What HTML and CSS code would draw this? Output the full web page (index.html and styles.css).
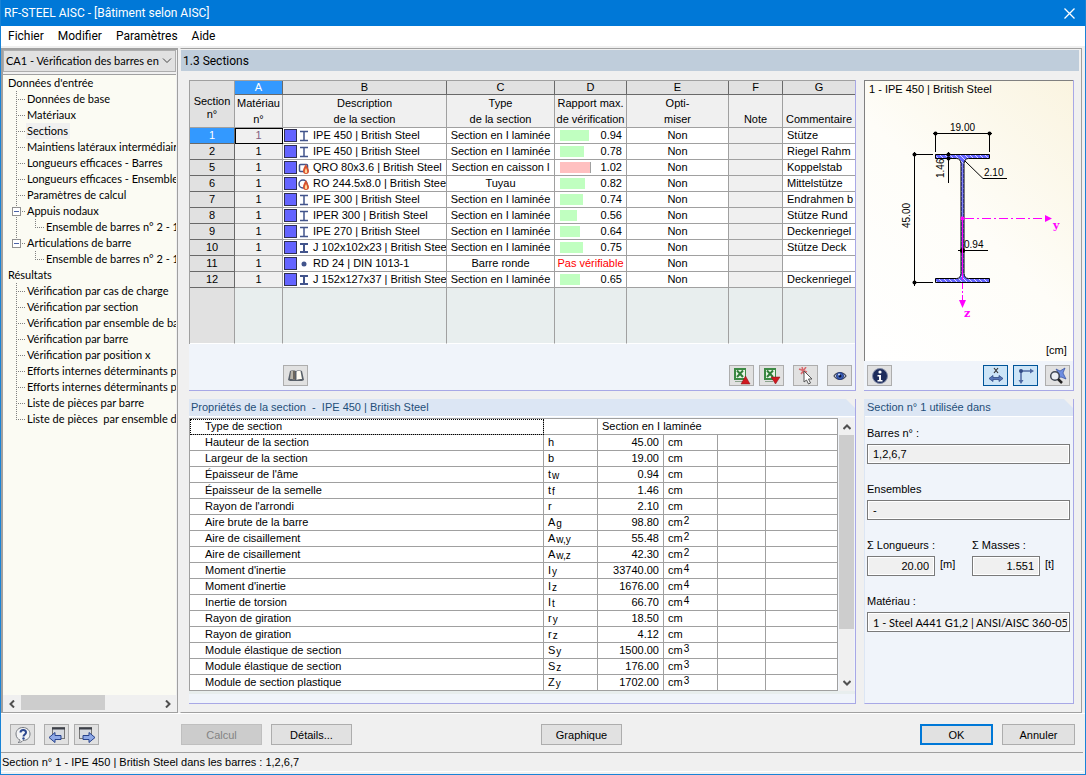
FILE: index.html
```html
<!DOCTYPE html>
<html lang="fr">
<head>
<meta charset="utf-8">
<title>RF-STEEL AISC - [Bâtiment selon AISC]</title>
<link rel="stylesheet" href="styles.css">
</head>
<body>
<svg class="defs" aria-hidden="true">
  <symbol id="sec-i" viewBox="0 0 12 12"><path d="M2 1.500h8M2 10.500h8M6 1.500v9" stroke="#42548c" stroke-width="1.500" fill="none"/></symbol>
  <symbol id="sec-ih" viewBox="0 0 12 12"><path d="M2 2h8M2 10h8" stroke="#42548c" stroke-width="2" fill="none"/><path d="M6 2v8" stroke="#42548c" stroke-width="2"/></symbol>
  <symbol id="sec-dot" viewBox="0 0 12 12"><circle cx="6" cy="6" r="2.500" fill="#42548c"/></symbol>
  <symbol id="flame" viewBox="0 0 12 12"><path d="M8 2c-2 3-3 5-3 7 0 2 1 3 3 3s3-1 3-3c0-2-2-4-3-7z" fill="#d8522e"/><path d="M8 6c-1 2-1.500 3-1 4.500.6.8 1.600.8 2 0C9.500 9 9 8 8 6z" fill="#ffd9a0"/></symbol>
  <symbol id="sec-box" viewBox="0 0 12 12"><rect x="1.500" y="2.500" width="8" height="7" rx="1" fill="#fff" stroke="#42548c" stroke-width="1.500"/><use href="#flame"/></symbol>
  <symbol id="sec-tube" viewBox="0 0 12 12"><circle cx="5" cy="6" r="4" fill="#fff" stroke="#42548c" stroke-width="1.500"/><use href="#flame"/></symbol>
  <symbol id="excel" viewBox="0 0 18 18"><rect x="1" y="1" width="12" height="12" fill="#3c8a45"/><rect x="3" y="3" width="9" height="8" fill="#e8f4e6"/><path d="M4 3.500l6 6.500M10 3.500l-6 6.500" stroke="#2f7d38" stroke-width="2"/><path d="M2 14.500h8" stroke="#8aa48c"/></symbol>
</svg>
<div class="window">
  <header class="titlebar">
    <h1>RF-STEEL AISC - [Bâtiment selon AISC]</h1>
    <button class="close" aria-label="Fermer"><svg width="11" height="11" viewBox="0 0 11 11"><path d="M.5.500l10 10M10.500.500l-10 10" stroke="#fff" stroke-width="1.300" fill="none"/></svg></button>
  </header>
  <nav class="menubar">
    <button>Fichier</button><button>Modifier</button><button>Paramètres</button><button>Aide</button>
  </nav>

  <div class="workspace">
    <aside class="sidebar">
      <div class="combo">
        <select aria-label="Cas de calcul"><option>CA1 - Vérification des barres en acier</option></select>
        <svg width="10" height="6" viewBox="0 0 10 6"><path d="M1 .5l4 4 4-4" stroke="#444" fill="none"/></svg>
      </div>
      <ul class="tree">
        <li><span class="node">Données d'entrée</span></li>
        <li><i class="branch"></i><span class="node">Données de base</span></li>
        <li><i class="branch"></i><span class="node">Matériaux</span></li>
        <li><i class="branch"></i><span class="node current">Sections</span></li>
        <li><i class="branch"></i><span class="node">Maintiens latéraux intermédiaires</span></li>
        <li><i class="branch"></i><span class="node">Longueurs efficaces - Barres</span></li>
        <li><i class="branch"></i><span class="node">Longueurs efficaces - Ensembles</span></li>
        <li><i class="branch"></i><span class="node">Paramètres de calcul</span></li>
        <li><i class="branch"><button class="toggle" aria-label="Réduire Appuis nodaux"></button></i><span class="node">Appuis nodaux</span></li>
        <li><i class="branch pass"></i><i class="branch last"></i><span class="node">Ensemble de barres n° 2 - 1</span></li>
        <li><i class="branch last"><button class="toggle" aria-label="Réduire Articulations de barre"></button></i><span class="node">Articulations de barre</span></li>
        <li><i class="branch none"></i><i class="branch last"></i><span class="node">Ensemble de barres n° 2 - 1</span></li>
        <li><span class="node">Résultats</span></li>
        <li><i class="branch"></i><span class="node">Vérification par cas de charge</span></li>
        <li><i class="branch"></i><span class="node">Vérification par section</span></li>
        <li><i class="branch"></i><span class="node">Vérification par ensemble de barres</span></li>
        <li><i class="branch"></i><span class="node">Vérification par barre</span></li>
        <li><i class="branch"></i><span class="node">Vérification par position x</span></li>
        <li><i class="branch"></i><span class="node">Efforts internes déterminants par barre</span></li>
        <li><i class="branch"></i><span class="node">Efforts internes déterminants par ensemble</span></li>
        <li><i class="branch"></i><span class="node">Liste de pièces par barre</span></li>
        <li><i class="branch last"></i><span class="node">Liste de pièces&nbsp; par ensemble de barres</span></li>
      </ul>
      <div class="hscroll">
        <button aria-label="Défiler à gauche"><svg width="6" height="8" viewBox="0 0 6 8"><path d="M5 .5L1.500 4 5 7.500" stroke="#505050" stroke-width="2" fill="none"/></svg></button>
        <span class="thumb"></span>
        <button aria-label="Défiler à droite"><svg width="6" height="8" viewBox="0 0 6 8"><path d="M1 .5L4.500 4 1 7.500" stroke="#505050" stroke-width="2" fill="none"/></svg></button>
      </div>
    </aside>

    <main class="content">
      <h2 class="heading">1.3 Sections</h2>
      <div class="panels">
        <section class="panel sections">
          <table class="grid">
            <colgroup><col class="w45"><col class="w48"><col><col class="w108"><col class="w72"><col class="w102"><col class="w54"><col class="w72"></colgroup>
            <thead>
              <tr class="letters"><th rowspan="2" class="corner">Section<br>n°</th><th class="on">A</th><th>B</th><th>C</th><th>D</th><th>E</th><th>F</th><th>G</th></tr>
              <tr class="names"><th>Matériau<br>n°</th><th>Description<br>de la section</th><th>Type<br>de la section</th><th>Rapport max.<br>de vérification</th><th>Opti-<br>miser</th><th>Note</th><th>Commentaire</th></tr>
            </thead>
            <tbody>
              <tr><th class="on">1</th><td class="mat focus">1</td><td><div class="desc"><b class="swatch"></b><svg><use href="#sec-i"/></svg><span>IPE 450 | British Steel</span></div></td><td class="c">Section en I laminée</td><td><div class="ratio"><span class="track"><b class="bar" style="width:94%"></b></span>0.94</div></td><td class="c">Non</td><td class="note"></td><td class="com">Stütze</td></tr>
              <tr><th>2</th><td class="mat">1</td><td><div class="desc"><b class="swatch"></b><svg><use href="#sec-i"/></svg><span>IPE 450 | British Steel</span></div></td><td class="c">Section en I laminée</td><td><div class="ratio"><span class="track"><b class="bar" style="width:78%"></b></span>0.78</div></td><td class="c">Non</td><td class="note"></td><td class="com">Riegel Rahm</td></tr>
              <tr><th>5</th><td class="mat">1</td><td><div class="desc"><b class="swatch"></b><svg><use href="#sec-box"/></svg><span>QRO 80x3.6 | British Steel</span></div></td><td class="c">Section en caisson l</td><td><div class="ratio"><span class="track"><b class="bar over" style="width:100%"></b></span>1.02</div></td><td class="c">Non</td><td class="note"></td><td class="com">Koppelstab</td></tr>
              <tr><th>6</th><td class="mat">1</td><td><div class="desc"><b class="swatch"></b><svg><use href="#sec-tube"/></svg><span>RO 244.5x8.0 | British Stee</span></div></td><td class="c">Tuyau</td><td><div class="ratio"><span class="track"><b class="bar" style="width:82%"></b></span>0.82</div></td><td class="c">Non</td><td class="note"></td><td class="com">Mittelstütze</td></tr>
              <tr><th>7</th><td class="mat">1</td><td><div class="desc"><b class="swatch"></b><svg><use href="#sec-i"/></svg><span>IPE 300 | British Steel</span></div></td><td class="c">Section en I laminée</td><td><div class="ratio"><span class="track"><b class="bar" style="width:74%"></b></span>0.74</div></td><td class="c">Non</td><td class="note"></td><td class="com">Endrahmen b</td></tr>
              <tr><th>8</th><td class="mat">1</td><td><div class="desc"><b class="swatch"></b><svg><use href="#sec-i"/></svg><span>IPER 300 | British Steel</span></div></td><td class="c">Section en I laminée</td><td><div class="ratio"><span class="track"><b class="bar" style="width:56%"></b></span>0.56</div></td><td class="c">Non</td><td class="note"></td><td class="com">Stütze Rund</td></tr>
              <tr><th>9</th><td class="mat">1</td><td><div class="desc"><b class="swatch"></b><svg><use href="#sec-i"/></svg><span>IPE 270 | British Steel</span></div></td><td class="c">Section en I laminée</td><td><div class="ratio"><span class="track"><b class="bar" style="width:64%"></b></span>0.64</div></td><td class="c">Non</td><td class="note"></td><td class="com">Deckenriegel</td></tr>
              <tr><th>10</th><td class="mat">1</td><td><div class="desc"><b class="swatch"></b><svg><use href="#sec-ih"/></svg><span>J 102x102x23 | British Stee</span></div></td><td class="c">Section en I laminée</td><td><div class="ratio"><span class="track"><b class="bar" style="width:75%"></b></span>0.75</div></td><td class="c">Non</td><td class="note"></td><td class="com">Stütze Deck</td></tr>
              <tr><th>11</th><td class="mat">1</td><td><div class="desc"><b class="swatch"></b><svg><use href="#sec-dot"/></svg><span>RD 24 | DIN 1013-1</span></div></td><td class="c">Barre ronde</td><td class="c bad">Pas vérifiable</td><td class="c">Non</td><td class="note"></td><td class="com"></td></tr>
              <tr><th>12</th><td class="mat">1</td><td><div class="desc"><b class="swatch"></b><svg><use href="#sec-ih"/></svg><span>J 152x127x37 | British Stee</span></div></td><td class="c">Section en I laminée</td><td><div class="ratio"><span class="track"><b class="bar" style="width:65%"></b></span>0.65</div></td><td class="c">Non</td><td class="note"></td><td class="com">Deckenriegel</td></tr>
              <tr class="filler"><th></th><td></td><td></td><td></td><td></td><td></td><td></td><td></td></tr>
            </tbody>
          </table>
          <div class="tools">
            <button class="tool library" aria-label="Bibliothèque"><svg width="18" height="18" viewBox="0 0 18 18"><path d="M1 13L3 4c2-1 4-1 6 0 2-1 4-1 6 0l2 9-2 1H3z" fill="#59606a"/><path d="M3 12l1-8c2-1 3-.5 4 .5V13c-1-1-3-1-5-1z" fill="#b9b5aa"/><path d="M6 4h2v9l-2-1z" fill="#6d675d"/><path d="M9.500 4.500c1-1 3-1 4-.5l1.500 8c-2 0-4 0-5.500 1z" fill="#fffdf4"/></svg></button>
            <button class="tool" aria-label="Exporter vers Excel"><svg width="18" height="18" viewBox="0 0 18 18"><use href="#excel"/><path d="M12.500 9l4.500 8H8z" fill="#d01820" stroke="#85141a" stroke-width=".5"/></svg></button>
            <button class="tool import" aria-label="Importer depuis Excel"><svg width="18" height="18" viewBox="0 0 18 18"><use href="#excel"/><path d="M12.500 17l4.500-7H8z" fill="#d01820" stroke="#85141a" stroke-width=".5"/></svg></button>
            <button class="tool" aria-label="Sélectionner"><svg width="18" height="18" viewBox="0 0 18 18"><path d="M2 2l8 3M9 0L4 7M5 0l2 7" stroke="#d8686c" stroke-width="1.500"/><path d="M7 4v11l2.500-2 2 4 2-1-2-4h3.500z" fill="#fff" stroke="#555" stroke-width="1"/></svg></button>
            <button class="tool" aria-label="Voir"><svg width="18" height="18" viewBox="0 0 18 18"><path d="M3 9c3-4.500 9-4.500 12 0-3 4.500-9 4.500-12 0z" fill="#dde3f2" stroke="#454b5c" stroke-width="1.300"/><circle cx="9" cy="9" r="3.500" fill="#3d62bd" stroke="#23397f"/><circle cx="9" cy="9" r="1.500" fill="#0d1535"/><circle cx="8" cy="7.500" r="1" fill="#cfe0ff"/></svg></button>
          </div>
        </section>

        <section class="panel preview">
          <svg class="drawing" viewBox="5 6 208 280" role="img" aria-label="Section IPE 450">
            <defs>
              <pattern id="hatch" width="5" height="5" patternUnits="userSpaceOnUse"><rect width="5" height="5" fill="#6464ff"/><path d="M0 0l5 5" stroke="#d8d8ff" stroke-width="1"/></pattern>
            </defs>
            <text x="9" y="18" class="t11">1 - IPE 450 | British Steel</text>
            <g stroke="#000" fill="none">
              <path d="M73 58.500h59M75.500 58v19M129.500 58v19M54.500 77v134M55 79.500h18M55 207.500h18M88.500 77v31M105 86l18 17.500h24M98 175.500h30"/>
              <path d="M75.500 79.500h54v4h-21q-4 0-4.500 5v110q.5 5 4.500 5h21v4h-54v-4h21q4 0 4.500-5v-110q-.5-5-4.500-5h-21z" fill="url(#hatch)"/>
            </g>
            <g><circle cx="75.500" cy="58.500" r="2"/><circle cx="129.500" cy="58.500" r="2"/><circle cx="54.500" cy="79.500" r="2"/><circle cx="54.500" cy="207.500" r="2"/><circle cx="88.500" cy="79.500" r="2"/><circle cx="88.500" cy="83.500" r="2"/><circle cx="102.500" cy="175.500" r="2.500"/></g>
            <path d="M102.500 88v55" stroke="#8080ff"/>
            <g stroke="#f0f" fill="none"><path d="M105 143.500h80" stroke-dasharray="9 3 2 3"/><path d="M102.500 145v60"/><path d="M102.500 208v18" stroke-dasharray="6 2 2 2"/></g>
            <g fill="#f0f"><circle cx="102.500" cy="143.500" r="2"/><path d="M185 140l7 3.500-7 3.500zM99 225h7l-3.500 8z"/><text x="193" y="154" class="axis">y</text><text x="104" y="242" class="axis">z</text></g>
            <text x="90" y="56" class="t10">19.00</text>
            <text x="124" y="101" class="t10">2.10</text>
            <text x="104" y="173" class="t10">0.94</text>
            <text transform="translate(50 153) rotate(-90)" class="t10">45.00</text>
            <text transform="translate(84 103) rotate(-90)" class="t10">1.46</text>
            <text x="186" y="279" class="t11">[cm]</text>
          </svg>
          <div class="tools">
            <button class="tool" aria-label="Informations"><svg width="18" height="18" viewBox="0 0 18 18"><circle cx="9" cy="9" r="7.500" fill="#1d2c5c" stroke="#8089a5"/><circle cx="9" cy="5" r="1.600" fill="#fff"/><path d="M6.500 8H10v5h1.500v1.500h-5V13H8V9.500H6.500z" fill="#fff"/></svg></button>
            <button class="tool pressed dims" aria-label="Cotes"><svg width="18" height="18" viewBox="0 0 18 18"><path d="M7 1l4 5M11 1L7 6" stroke="#333" stroke-width="1.200"/><path d="M2 11.500l4-3v2h6v-2l4 3-4 3v-2H6v2z" fill="#5877b8" stroke="#314b86" stroke-width=".8"/></svg></button>
            <button class="tool pressed" aria-label="Axes"><svg width="18" height="18" viewBox="0 0 18 18"><path d="M4 4h10M4 4v10" stroke="#4d68a2" stroke-width="1.500"/><circle cx="4" cy="4" r="2" fill="#314b86"/><path d="M13 1.500l4 2.500-4 2.500zM1.500 13h5L4 17z" fill="#4d68a2"/></svg></button>
            <button class="tool" aria-label="Vue entière"><svg width="18" height="18" viewBox="0 0 18 18"><path d="M7 2l4 2 5-3-2 5 3 6-5-2-3 1 1-4z" fill="#6d8de0" stroke="#304c9c" stroke-width=".7"/><circle cx="6" cy="9" r="4.300" fill="#edf2f8" fill-opacity=".8" stroke="#404854" stroke-width="1.500"/><path d="M9 12l4 4" stroke="#222" stroke-width="2.500"/></svg></button>
          </div>
        </section>

        <section class="panel props">
          <h3 class="caption">Propriétés de la section&nbsp; -&nbsp; IPE 450 | British Steel</h3>
          <div class="scroller">
            <table class="proplist">
              <colgroup><col><col class="w54"><col class="w66"><col class="w54"><col class="w48"><col class="w72"></colgroup>
              <tbody>
                <tr><td class="focused">Type de section</td><td></td><td colspan="3" class="l">Section en I laminée</td><td></td></tr>
                <tr><td>Hauteur de la section</td><td>h</td><td>45.00</td><td>cm</td><td></td><td></td></tr>
                <tr><td>Largeur de la section</td><td>b</td><td>19.00</td><td>cm</td><td></td><td></td></tr>
                <tr><td>Épaisseur de l'âme</td><td>t<sub>w</sub></td><td>0.94</td><td>cm</td><td></td><td></td></tr>
                <tr><td>Épaisseur de la semelle</td><td>t<sub>f</sub></td><td>1.46</td><td>cm</td><td></td><td></td></tr>
                <tr><td>Rayon de l'arrondi</td><td>r</td><td>2.10</td><td>cm</td><td></td><td></td></tr>
                <tr><td>Aire brute de la barre</td><td>A<sub>g</sub></td><td>98.80</td><td>cm<sup>2</sup></td><td></td><td></td></tr>
                <tr><td>Aire de cisaillement</td><td>A<sub>w,y</sub></td><td>55.48</td><td>cm<sup>2</sup></td><td></td><td></td></tr>
                <tr><td>Aire de cisaillement</td><td>A<sub>w,z</sub></td><td>42.30</td><td>cm<sup>2</sup></td><td></td><td></td></tr>
                <tr><td>Moment d'inertie</td><td>I<sub>y</sub></td><td>33740.00</td><td>cm<sup>4</sup></td><td></td><td></td></tr>
                <tr><td>Moment d'inertie</td><td>I<sub>z</sub></td><td>1676.00</td><td>cm<sup>4</sup></td><td></td><td></td></tr>
                <tr><td>Inertie de torsion</td><td>I<sub>t</sub></td><td>66.70</td><td>cm<sup>4</sup></td><td></td><td></td></tr>
                <tr><td>Rayon de giration</td><td>r<sub>y</sub></td><td>18.50</td><td>cm</td><td></td><td></td></tr>
                <tr><td>Rayon de giration</td><td>r<sub>z</sub></td><td>4.12</td><td>cm</td><td></td><td></td></tr>
                <tr><td>Module élastique de section</td><td>S<sub>y</sub></td><td>1500.00</td><td>cm<sup>3</sup></td><td></td><td></td></tr>
                <tr><td>Module élastique de section</td><td>S<sub>z</sub></td><td>176.00</td><td>cm<sup>3</sup></td><td></td><td></td></tr>
                <tr><td>Module de section plastique</td><td>Z<sub>y</sub></td><td>1702.00</td><td>cm<sup>3</sup></td><td></td><td></td></tr>
              </tbody>
            </table>
            <div class="vscroll">
              <button aria-label="Défiler vers le haut"><svg width="8" height="6" viewBox="0 0 8 6"><path d="M.5 5L4 1.500 7.500 5" stroke="#505050" stroke-width="2" fill="none"/></svg></button>
              <span class="thumb"></span>
              <button aria-label="Défiler vers le bas"><svg width="8" height="6" viewBox="0 0 8 6"><path d="M.5 1L4 4.500 7.500 1" stroke="#505050" stroke-width="2" fill="none"/></svg></button>
            </div>
          </div>
        </section>

        <section class="panel usage">
          <h3 class="caption">Section n° 1 utilisée dans</h3>
          <form class="fields">
            <div class="field"><label for="members">Barres n° :</label><input id="members" value="1,2,6,7" readonly></div>
            <div class="field"><label for="sets">Ensembles</label><input id="sets" value="-" readonly></div>
            <div class="pair">
              <div class="field"><label for="length">Σ Longueurs :</label><div class="unit"><input id="length" value="20.00" readonly><span>[m]</span></div></div>
              <div class="field"><label for="mass">Σ Masses :</label><div class="unit"><input id="mass" value="1.551" readonly><span>[t]</span></div></div>
            </div>
            <div class="field"><label for="material">Matériau :</label><input id="material" value="1 - Steel A441 G1,2 | ANSI/AISC 360-05" readonly></div>
          </form>
        </section>
      </div>
    </main>
  </div>

  <div class="actions">
    <div class="nav">
      <button class="tool help" aria-label="Aide"><svg width="18" height="18" viewBox="0 0 18 18"><path d="M9 1.500c-4.500 0-7 3-7 6.500s2 5 4 6c0 1-1 2-2 2.500 2 0 4-.5 5-2 4.500 0 7-3 7-6.500s-3-6.500-7-6.500z" fill="#f2f3f5" stroke="#777b82"/><path d="M6.500 6.500C6.500 3 12 3 12 6.500 12 8.500 9.500 8.500 9.500 10.500" fill="none" stroke="#2c478f" stroke-width="2"/><circle cx="9.500" cy="12.500" r="1.200" fill="#2c478f"/></svg></button>
      <button class="tool" aria-label="Page précédente"><svg width="18" height="18" viewBox="0 0 18 18"><rect x="4.500" y="1.500" width="12" height="11" fill="#d7dae0" stroke="#777"/><path d="M4 2.500h13" stroke="#3b3f48" stroke-width="2"/><path d="M1 11.500l6-5v3h6v4H7v3z" fill="#8ea8e6" stroke="#27428c"/></svg></button>
      <button class="tool" aria-label="Page suivante"><svg width="18" height="18" viewBox="0 0 18 18"><rect x="1.500" y="1.500" width="12" height="11" fill="#d7dae0" stroke="#777"/><path d="M1 2.500h13" stroke="#3b3f48" stroke-width="2"/><path d="M17 11.500l-6-5v3H5v4h6v3z" fill="#8ea8e6" stroke="#27428c"/></svg></button>
    </div>
    <button class="btn" disabled>Calcul</button>
    <button class="btn">Détails...</button>
    <button class="btn graphic">Graphique</button>
    <button class="btn ok">OK</button>
    <button class="btn cancel">Annuler</button>
  </div>
  <footer class="status">Section n° 1 - IPE 450 | British Steel dans les barres : 1,2,6,7</footer>
</div>
</body>
</html>
```
FILE: styles.css
```css
* { box-sizing: border-box; }
body { margin: 0; background: #f0f0f0; color: #000; font: 11px/16px "Liberation Sans", Arial, sans-serif; }
button, input, select { font: inherit; color: inherit; border-radius: 0; margin: 0; }
button { padding: 0; border: 0; background: none; }
h1, h2, h3 { margin: 0; font-weight: normal; }
.defs { display: none; }
.window { display: flex; flex-direction: column; min-height: 100vh; border: 1px solid #1883d7; border-top: 0; }

.titlebar { display: flex; align-items: center; justify-content: space-between; height: 26px; padding: 0 10px 0 3px; background: #0078d7; color: #fff; }
.titlebar h1 { font: 12px/26px Roboto, "Noto Sans", sans-serif; }
.close { display: flex; }
.menubar { display: flex; gap: 14px; height: 20px; padding-left: 7px; background: #fff; font: 12px/20px Roboto, "Noto Sans", sans-serif; }

.workspace { display: flex; flex: 1; gap: 2px; margin-top: 2px; border-bottom: 1px solid #fff; }
.sidebar { display: flex; flex-direction: column; width: 177px; border: 1px solid #a0a0a0; border-width: 2px 1px 1px 2px; padding-right: 1px; font-family: Lato, "Liberation Sans", sans-serif; }
.combo { display: grid; align-items: center; height: 22px; margin-bottom: 2px; border: 1px solid #adadad; background: #e1e1e1; }
.combo select, .combo svg { grid-area: 1 / 1; }
.combo svg { justify-self: end; margin-right: 3px; }
.combo select { appearance: none; width: 156px; height: 20px; padding: 0 0 0 2px; border: 0; background: none; overflow: hidden; text-overflow: clip; }
.tree { flex: 1; margin: 0; padding: 0 0 0 5px; border-top: 1px solid #a0a0a0; list-style: none; background: #fbfbf3; overflow: hidden; }
.tree li { display: flex; height: 16px; white-space: nowrap; }
.node { padding-right: 2px; }
.current { background: #f0f0f0; margin-left: -1px; padding-left: 1px; }
.branch { --v: repeating-linear-gradient(to bottom, #808080 0 1px, transparent 1px 2px); --h: repeating-linear-gradient(to right, #808080 0 1px, transparent 1px 2px); flex: none; display: flex; align-items: center; width: 19px; background: var(--v) 8px 0 / 1px 100% no-repeat, var(--h) 8px 8px / 9px 1px no-repeat; }
.branch.last { background: var(--v) 8px 0 / 1px 8px no-repeat, var(--h) 8px 8px / 9px 1px no-repeat; }
.branch.pass { background: var(--v) 8px 0 / 1px 100% no-repeat; }
.branch.none { background: none; }
.toggle { width: 9px; height: 9px; margin-left: 4px; border: 1px solid #919191; background: linear-gradient(#4b63a7, #4b63a7) center / 5px 1px no-repeat #fff; }
.hscroll { display: grid; grid-template-columns: 18px 1fr 17px; height: 17px; background: #f0f0f0; }
.hscroll button, .vscroll button { display: flex; align-items: center; justify-content: center; }
.hscroll .thumb { width: 61%; background: #cdcdcd; margin: 0 0 2px; }

.content { flex: 1; min-width: 0; border: 1px solid #a0a0a0; border-left-color: #f0f0f0; margin-right: 3px; }
.heading { height: 21px; margin: 1px 2px 0 0; padding-left: 2px; background: #bfcddb; font: 12px/22px Roboto, "Noto Sans", sans-serif; }
.panels { display: grid; grid-template-columns: 1fr 210px; grid-template-rows: auto auto; gap: 9px 8px; padding: 9px 7px 8px 8px; }
.panel { min-width: 0; border: 1px solid #a8a8e6; border-width: 0 1px 1px 0; background: #f0f4fa; }
.w45 { width: 45px; } .w48 { width: 48px; } .w54 { width: 54px; } .w66 { width: 66px; }
.w72 { width: 72px; } .w102 { width: 102px; } .w108 { width: 108px; }

table { width: 100%; table-layout: fixed; border-collapse: separate; border-spacing: 0; }
th, td { padding: 0; font-weight: normal; white-space: nowrap; overflow: hidden; border: 0 solid #a0a0a0; border-width: 0 1px 1px 0; }
.grid { border: 1px solid #a0a0a0; border-width: 1px 0 0 1px; line-height: 15px; }
.grid tr > :last-child { border-right: 0; }
.letters th { height: 14px; line-height: 13px; background: #e1e1e1; border-color: #696969; }
.letters .corner { line-height: 13px; padding-top: 8px; border-color: #a0a0a0; }
.names th { height: 33px; line-height: 16px; background: #f0f0f0; vertical-align: bottom; }
.grid tbody th { background: #e1e1e1; border-color: #696969; }
.grid tbody tr { height: 16px; }
.grid .on, .grid tbody .on { background: #3399ff; color: #fff; }
.grid td { background: #fff; }
.grid .mat, .grid .note { background: #f0f0f0; text-align: center; }
.grid .focus { outline: 1px solid #000; outline-offset: -1px; color: #806080; }
.grid .c { text-align: center; }
.grid .bad { color: #ff0000; }
.grid .com { padding-left: 4px; }
.grid .filler { height: 56px; }
.grid .filler th { border-color: #a0a0a0; border-bottom-color: #fff; }
.grid .filler td { background: #e8eeee; border-bottom-color: #fff; }
.desc { display: flex; align-items: center; padding-left: 1px; height: 15px; }
.swatch { width: 13px; height: 13px; border: 1px solid #303050; background: #6464ff; flex: none; }
.desc svg { width: 12px; height: 12px; margin: 0 3px 0 1px; flex: none; }
.ratio { display: flex; align-items: center; justify-content: space-between; padding: 0 4px 0 5px; }
.track { width: 31px; height: 11px; }
.bar { display: block; height: 11px; background: #c0ffc0; }
.bar.over { background: #ffc0c0; border-right: 1px solid #a0a0a0; }

.tools { display: flex; align-items: center; height: 46px; padding: 21px 3px 4px 94px; }
.tool { display: flex; align-items: center; justify-content: center; width: 25px; height: 21px; border: 1px solid #adadad; background: #e1e1e1; }
.tool.pressed { border-color: #005499; background: #cce4f7; }
.sections .tool { margin-left: 9px; }
.sections .library { margin: 0 auto 0 0; }
.sections .import { margin-left: 5px; }
.preview { display: flex; flex-direction: column; }
.drawing { flex: 1 1 281px; height: 281px; width: 100%; border: 1px solid #808080; border-width: 1px 0 0 1px; background: linear-gradient(225deg, #faf4e0, #fefdf8 50%, #fff); }
.preview .tools { height: 29px; padding: 4px 3px; gap: 5px; }
.preview .dims { margin-left: auto; }
.preview .pressed + .tool:last-child { margin-left: 2px; }
.t11 { font-size: 11px; }
.t10 { font-size: 10px; }
.axis { font: bold 11px "DejaVu Serif", serif; }

.caption { height: 18px; padding-left: 2px; border-bottom: 1px solid #fff; background: #dce6f4; clip-path: polygon(0 0, calc(100% - 9px) 0, 100% 9px, 100% 100%, 0 100%); color: #1f4e79; font-size: 11px; line-height: 17px; }
.props, .usage { margin-top: -1px; background: linear-gradient(45deg, #f0f4fa calc(100% - 7px), #f0f0f0 calc(100% - 7px)); }
.scroller { display: flex; margin-top: 1px; padding-right: 1px; border-bottom: 3px solid #e8eeee; margin-bottom: 9px; }
.proplist { flex: 1; border: 1px solid #a0a0a0; border-width: 1px 0 0 1px; background: #fff; line-height: 15px; }
.proplist tr { height: 16px; }
.proplist td { padding-left: 4px; }
.proplist td:first-child { padding-left: 15px; }
.proplist td:nth-child(3) { padding: 0 4px; text-align: right; }
.proplist td.l:nth-child(3) { text-align: left; }
.proplist .focused { outline: 1px dotted #000; outline-offset: -1px; }
sub, sup { font-size: 10px; line-height: 0; margin-left: 1px; vertical-align: -1px; }
sup { vertical-align: 2px; }
.vscroll { display: grid; grid-template-rows: 17px 1fr 17px; width: 15px; margin-left: 1px; background: #f0f0f0; }
.vscroll .thumb { height: 81%; background: #cdcdcd; }

.usage { display: flex; flex-direction: column; border-left: 1px solid #dce6f4; }
.fields { display: flex; flex-direction: column; gap: 17px; padding: 8px 3px 0 2px; }
.field { display: flex; flex-direction: column; gap: 3px; min-width: 0; }
.field input { width: 100%; height: 20px; padding: 0 2px 0 5px; border: 1px solid #7a7a7a; background: #f0f0f0; box-shadow: inset 0 0 0 1px #fff; }
.field #material { font-family: Lato, "Liberation Sans", sans-serif; }
.pair { display: grid; grid-template-columns: 1fr 1fr; gap: 7px; }
.unit { display: flex; gap: 5px; }
.unit input { width: 68px; padding-right: 5px; text-align: right; }

.actions { display: flex; align-items: center; height: 38px; padding: 3px 10px 0 9px; gap: 9px; }
.nav { display: flex; width: 162px; gap: 5px; }
.nav .help { margin-right: 4px; }
.btn { width: 81px; height: 21px; border: 1px solid #adadad; background: #e1e1e1; }
.btn:disabled { background: #cccccc; border-color: #bfbfbf; color: #838383; }
.btn.graphic { margin-left: 180px; }
.btn.ok { width: 73px; margin-left: auto; border: 2px solid #0078d7; }
.btn.cancel { width: 73px; }
.status { height: 20px; margin: 0 2px 2px 0; border-top: 1px solid #a0a0a0; border-bottom: 1px solid #fff; padding-left: 1px; line-height: 18px; }
```
